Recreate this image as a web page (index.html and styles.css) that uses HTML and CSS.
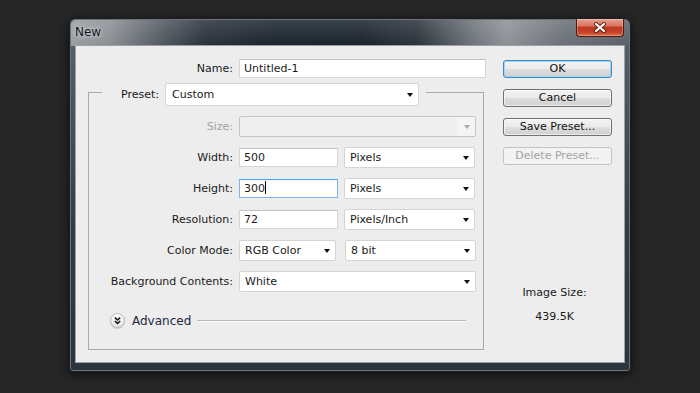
FILE: index.html
```html
<!DOCTYPE html>
<html lang="en">
<head>
    <meta charset="UTF-8">
    <title>New</title>
    <link rel="stylesheet" href="styles.css">
</head>
<body>
<div class="window">
    <div class="titlebar">
        <span class="title">New</span>
        <div class="close">
            <svg width="14" height="11" viewBox="0 0 14 11">
                <path d="M3 2 L11 9 M11 2 L3 9" stroke="#5a1f14" stroke-width="4" stroke-linecap="round"/>
                <path d="M3 2 L11 9 M11 2 L3 9" stroke="#ffffff" stroke-width="2.2" stroke-linecap="round"/>
            </svg>
        </div>
    </div>
    <div class="client">
        <div class="form">
            <div class="row name_row">
                <label class="lbl name_lbl">Name:</label>
                <div class="field wide">Untitled-1</div>
            </div>
            <div class="group">
                <div class="preset_row">
                    <span class="preset_lbl">Preset:</span>
                    <div class="select preset"><span>Custom</span><i class="caret"></i></div>
                </div>
                <div class="row">
                    <label class="lbl off">Size:</label>
                    <div class="select full disabled"><span></span><i class="caret"></i></div>
                </div>
                <div class="row">
                    <label class="lbl">Width:</label>
                    <div class="field num">500</div>
                    <div class="select unit"><span>Pixels</span><i class="caret"></i></div>
                </div>
                <div class="row">
                    <label class="lbl">Height:</label>
                    <div class="field num focus">300<span class="cursor"></span></div>
                    <div class="select unit"><span>Pixels</span><i class="caret"></i></div>
                </div>
                <div class="row">
                    <label class="lbl">Resolution:</label>
                    <div class="field num">72</div>
                    <div class="select unit"><span>Pixels/Inch</span><i class="caret"></i></div>
                </div>
                <div class="row">
                    <label class="lbl">Color Mode:</label>
                    <div class="select mode"><span>RGB Color</span><i class="caret"></i></div>
                    <div class="select depth"><span>8 bit</span><i class="caret"></i></div>
                </div>
                <div class="row">
                    <label class="lbl">Background Contents:</label>
                    <div class="select full"><span>White</span><i class="caret"></i></div>
                </div>
                <div class="advanced">
                    <span class="adv_icon">
                        <svg width="15" height="15" viewBox="0 0 15 15">
                            <path d="M4.8 4.6 L7.5 7 L10.2 4.6 M4.8 8 L7.5 10.4 L10.2 8" fill="none" stroke="#1a1a1a" stroke-width="1.6"/>
                        </svg>
                    </span>
                    <span class="adv_text">Advanced</span>
                    <span class="adv_line"></span>
                </div>
            </div>
        </div>
        <div class="side">
            <div class="btn default">OK</div>
            <div class="btn">Cancel</div>
            <div class="btn">Save Preset...</div>
            <div class="btn disabled">Delete Preset...</div>
            <div class="image_size">
                <p>Image Size:</p>
                <p class="size_val">439.5K</p>
            </div>
        </div>
    </div>
</div>
</body>
</html>
```

FILE: styles.css
```css
* {
    margin: 0;
    padding: 0;
    box-sizing: border-box;
}

body {
    width: 700px;
    height: 393px;
    background: #262626;
    font-family: "DejaVu Sans", "Liberation Sans", sans-serif;
    font-size: 11px;
    color: #1a1a1a;
    overflow: hidden;
}

/* window frame */
.window {
    width: 562px;
    height: 354px;
    margin: 18px 0 0 69px;
    border: 1px solid #1b2027;
    border-radius: 7px 7px 4px 4px;
    padding: 0 5px 8px 5px;
    background:
        linear-gradient(rgba(255, 255, 255, 0.14), rgba(255, 255, 255, 0) 26px) no-repeat,
        linear-gradient(to right, #9a9ea2 0%, #8c9095 7%, #5a6168 15%, #2a323b 24%, #1c252f 36%, #1b242e 52%, #2c343c 62%, #6f757b 72%, #8d9297 78%, #6b7177 88%, #5b6167 100%) no-repeat,
        linear-gradient(#5c636a, #343b43 60%, #2d343c);
    background-size: 100% 27px, 100% 27px, 100% 100%;
    box-shadow: 0 0 0 1px #6a7179 inset, 0 2px 10px rgba(0, 0, 0, 0.7);
}

.titlebar {
    height: 26px;
    display: flex;
    justify-content: space-between;
    align-items: flex-start;
}

.title {
    font-size: 12px;
    line-height: 16px;
    padding: 5px 0 0 0;
    color: #101418;
    text-shadow: 0 0 6px rgba(255, 255, 255, 0.7), 0 0 2px rgba(255, 255, 255, 0.5);
}

.close {
    width: 48px;
    height: 18px;
    margin-right: 1px;
    border: 1px solid #4e1a12;
    border-top: none;
    border-radius: 0 0 4px 4px;
    background: linear-gradient(#e7a293 0%, #d8735f 40%, #c0361f 50%, #c8442a 80%, #e0734f 100%);
    box-shadow: 0 0 0 1px rgba(255, 255, 255, 0.25) inset;
    display: flex;
    justify-content: center;
    align-items: center;
}

.client {
    height: 318px;
    border: 1px solid #9aa1a8;
    background: #ededed;
    display: flex;
}

/* left column */
.form {
    width: 398px;
    margin-left: 12px;
    padding-top: 13px;
}

.row {
    display: flex;
    align-items: center;
    height: 21px;
    margin-top: 10px;
}

.name_row {
    margin-top: 0;
    height: 19px;
}

.lbl {
    width: 144px;
    margin-right: 6px;
    text-align: right;
    white-space: nowrap;
}

.name_lbl {
    width: 145px;
}

.lbl.off {
    color: #a3a3a3;
}

.field {
    height: 19px;
    background: #fff;
    border: 1px solid #d6d6d6;
    border-top-color: #c2c2c2;
    padding-left: 4px;
    line-height: 17px;
    white-space: nowrap;
}

.field.wide {
    width: 247px;
}

.field.num {
    width: 99px;
    margin-right: 6px;
}

.field.focus {
    border-color: #7eb4ea;
    border-top-color: #569de5;
}

.cursor {
    display: inline-block;
    width: 1px;
    height: 13px;
    background: #000;
    vertical-align: -2px;
}

.select {
    height: 21px;
    background: #fff;
    border: 1px solid #d4d4d4;
    border-radius: 2px;
    display: flex;
    align-items: center;
    justify-content: space-between;
    padding: 0 5px 0 5px;
    white-space: nowrap;
}

.select.full {
    width: 237px;
}

.select.unit {
    width: 131px;
}

.select.mode {
    width: 97px;
    margin-right: 9px;
}

.select.depth {
    width: 131px;
}

.select.disabled {
    background: linear-gradient(to right, #efefef 0, #efefef 217px, #f4f4f4 217px);
    border-color: #c4c4c4;
}

.select.disabled .caret {
    border-top-color: #ababab;
}

.caret {
    width: 0;
    height: 0;
    border-left: 3.5px solid transparent;
    border-right: 3.5px solid transparent;
    border-top: 4px solid #111;
}

/* preset group box */
.group {
    width: 396px;
    margin-top: 14px;
    border: 1px solid #a9a9a9;
    padding-bottom: 21px;
    display: flex;
    flex-direction: column;
}

.preset_row {
    align-self: flex-start;
    display: flex;
    align-items: center;
    margin: -10px 0 0 13px;
    padding: 0 7px 0 19px;
    background: #ededed;
}

.preset_lbl {
    margin-right: 6px;
}

.select.preset {
    width: 254px;
    height: 23px;
    padding-left: 6px;
}

.advanced {
    display: flex;
    align-items: center;
    height: 15px;
    margin: 21px 17px 0 21px;
}

.adv_icon {
    width: 15px;
    height: 15px;
    border-radius: 50%;
    border: 1px solid #b4b4b4;
    background: linear-gradient(#ffffff, #e6e6e6);
    box-shadow: 0 1px 1px rgba(0, 0, 0, 0.15);
    display: flex;
    justify-content: center;
    align-items: center;
}

.adv_icon svg {
    flex: none;
}

.adv_text {
    margin-left: 7px;
    font-size: 12px;
    color: #1c2a3a;
}

.adv_line {
    flex: 1;
    height: 2px;
    margin-left: 6px;
    border-top: 1px solid #b9b9b9;
    border-bottom: 1px solid #fafafa;
}

/* right column */
.side {
    width: 109px;
    margin-left: 17px;
    padding-top: 14px;
    display: flex;
    flex-direction: column;
}

.btn {
    height: 18px;
    margin-bottom: 11px;
    border: 1px solid #707070;
    border-radius: 3px;
    background: linear-gradient(#f3f3f3 0%, #ebebeb 48%, #dddddd 52%, #d0d0d0 100%);
    box-shadow: 0 0 0 1px rgba(255, 255, 255, 0.6) inset;
    text-align: center;
    line-height: 16px;
    color: #111;
}

.btn.default {
    border-color: #3c8ac8;
    box-shadow: 0 0 0 1px #9fd4f5 inset;
}

.btn.disabled {
    border-color: #c2c2c2;
    background: #f3f3f3;
    box-shadow: none;
    color: #a3a3a3;
}

.image_size {
    margin-top: 110px;
    padding-right: 6px;
    text-align: center;
    line-height: 14px;
}

.size_val {
    margin-top: 10px;
}
```
